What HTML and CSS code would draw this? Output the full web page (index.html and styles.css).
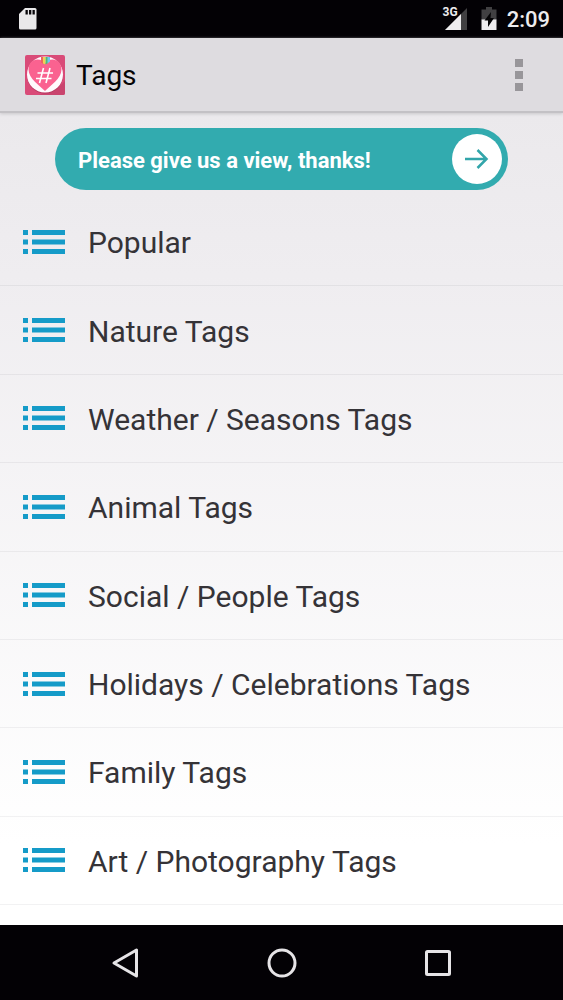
FILE: index.html
```html
<!DOCTYPE html>
<html lang="en">
<head>
<meta charset="utf-8">
<meta name="viewport" content="width=device-width, initial-scale=1">
<title>Tags</title>
<link rel="stylesheet" href="styles.css">
</head>
<body>
<svg class="sprite" aria-hidden="true">
  <symbol id="list-icon" viewBox="0 0 44 24">
    <path d="M1 0h5v5H1zM1 9.500h5v5H1zM1 19h5v5H1zM10 0h33v5H10zM10 9.500h33v5H10zM10 19h33v5H10z" fill="#159bc8"/>
  </symbol>
</svg>

<div class="status-bar">
  <svg class="sd-card" width="20" height="24" viewBox="0 0 20 24" aria-hidden="true">
    <path d="M7 1h10q1.500 0 1.500 1.500v18.500q0 1.500-1.500 1.500H2.500Q1 22.500 1 21V7z" fill="#e9e8ea"/>
    <path d="M7.500 3h2.300v4.500H7.500zM11 3h2.300v4.500H11zM14.500 3h2.300v4.500h-2.300z" fill="#08060a"/>
  </svg>
  <div class="status-right">
    <span class="network">3G</span>
    <svg class="signal" width="23" height="23" viewBox="0 0 23 23" aria-hidden="true">
      <path d="M23 0v22H1z" fill="#414042"/>
      <path d="M17 6V22H1z" fill="#eeedef"/>
    </svg>
    <svg class="battery" width="16" height="24" viewBox="0 0 16 24" aria-hidden="true">
      <path d="M5 0h6v2.500h4.500V13H.5V2.500H5z" fill="#414042"/>
      <path d="M.5 12.500h15V23H.5z" fill="#eeedef"/>
      <path d="M10 5 3.500 13.500h3.500V20L13 11H9.500z" fill="#050406"/>
    </svg>
    <time class="clock">2:09</time>
  </div>
</div>

<header class="app-bar">
  <svg class="logo" width="40" height="40" viewBox="0 0 40 40" aria-hidden="true">
    <rect width="40" height="40" rx="2" fill="#d94b78"/>
    <path d="M34 32l6-6v12q0 2-2 2H14l5-2z" fill="#c9446e"/>
    <circle cx="20" cy="20.500" r="18" fill="#b93a62"/>
    <circle cx="20" cy="19.500" r="18" fill="#fffafd"/>
    <path d="M20 36C15 31 3.500 23.500 3.500 14.500 3.500 8 8 4.500 12.500 4.500c3.500 0 6 2 7.500 4 1.500-2 4-4 7.500-4 4.500 0 9 3.500 9 10C36.500 23.500 25 31 20 36z" fill="#fa6290"/>
    <path d="M16 2h2.500v7L16 7.500z" fill="#eb685d"/>
    <path d="M18 2h2.500v7.500L18 8.500z" fill="#f3cf53"/>
    <path d="M20.500 2H23v6l-2.500 1.500z" fill="#55b96f"/>
    <path d="M22.500 2H25v4.500L22.500 8.500z" fill="#6fc6ef"/>
    <path d="M18.500 13l-4 15M25 13l-4 15M12.500 18H28M11 23.500h15.500" fill="none" stroke="#fff" stroke-width="1.600"/>
  </svg>
  <h1 class="title">Tags</h1>
  <button class="menu" type="button" aria-label="More options">
    <svg width="8" height="32" viewBox="0 0 8 32" aria-hidden="true">
      <path d="M0 0h8v8H0zM0 12h8v8H0zM0 24h8v8H0z" fill="#98969a"/>
    </svg>
  </button>
</header>

<main class="content">
  <button class="banner" type="button">
    <span class="label">Please give us a view, thanks!</span>
    <span class="banner-arrow">
      <svg width="24" height="20" viewBox="0 0 24 20" aria-hidden="true">
        <path d="M0 10h22M12.500 1l9 9-9 9" fill="none" stroke="#32a5aa" stroke-width="2.500"/>
      </svg>
    </span>
  </button>
  <ul class="tags">
    <li><a href="#popular"><svg class="list-icon" aria-hidden="true"><use href="#list-icon"/></svg><span class="label">Popular</span></a></li>
    <li><a href="#nature"><svg class="list-icon" aria-hidden="true"><use href="#list-icon"/></svg><span class="label">Nature Tags</span></a></li>
    <li><a href="#weather"><svg class="list-icon" aria-hidden="true"><use href="#list-icon"/></svg><span class="label">Weather / Seasons Tags</span></a></li>
    <li><a href="#animal"><svg class="list-icon" aria-hidden="true"><use href="#list-icon"/></svg><span class="label">Animal Tags</span></a></li>
    <li><a href="#social"><svg class="list-icon" aria-hidden="true"><use href="#list-icon"/></svg><span class="label">Social / People Tags</span></a></li>
    <li><a href="#holidays"><svg class="list-icon" aria-hidden="true"><use href="#list-icon"/></svg><span class="label">Holidays / Celebrations Tags</span></a></li>
    <li><a href="#family"><svg class="list-icon" aria-hidden="true"><use href="#list-icon"/></svg><span class="label">Family Tags</span></a></li>
    <li><a href="#art"><svg class="list-icon" aria-hidden="true"><use href="#list-icon"/></svg><span class="label">Art / Photography Tags</span></a></li>
  </ul>
</main>

<nav class="nav-bar" aria-label="System">
  <button type="button" aria-label="Back">
    <svg width="32" height="32" viewBox="0 0 32 32" aria-hidden="true"><path d="M26.500 3v26L4 16z" fill="none" stroke="#e6e4e7" stroke-width="3" stroke-linejoin="round"/></svg>
  </button>
  <button type="button" aria-label="Home">
    <svg width="32" height="32" viewBox="0 0 32 32" aria-hidden="true"><circle cx="16" cy="16" r="13" fill="none" stroke="#e6e4e7" stroke-width="3"/></svg>
  </button>
  <button type="button" aria-label="Recent apps">
    <svg width="32" height="32" viewBox="0 0 32 32" aria-hidden="true"><rect x="4.500" y="4.500" width="23" height="23" rx="1" fill="none" stroke="#e6e4e7" stroke-width="3"/></svg>
  </button>
</nav>
</body>
</html>
```
FILE: styles.css
```css
* {
  box-sizing: border-box;
}

body {
  margin: 0;
  min-height: 100vh;
  display: flex;
  flex-direction: column;
  font-family: Roboto, "Liberation Sans", sans-serif;
  color: #353337;
  background: #fff;
}

button {
  border: 0;
  padding: 0;
  background: none;
  font: inherit;
  cursor: pointer;
}

svg {
  display: block;
  flex: none;
}

.sprite {
  position: absolute;
  width: 0;
  height: 0;
}

.status-bar {
  display: flex;
  align-items: center;
  justify-content: space-between;
  height: 38px;
  padding: 0 13px 0 18px;
  background: #030105;
  color: #edecee;
}

.status-right {
  display: flex;
  align-items: center;
}

.network {
  align-self: flex-start;
  margin-right: -14px;
  padding-top: 1px;
  font-size: 12px;
  line-height: 14px;
  font-weight: 700;
}

.battery {
  margin: 0 10px 0 14px;
}

.clock {
  padding-top: 2px;
  font-size: 22px;
  line-height: 28px;
  font-weight: 500;
}

.app-bar {
  position: relative;
  z-index: 1;
  display: flex;
  align-items: center;
  height: 75px;
  padding: 0 40px 0 25px;
  background: #dedce0;
  border-bottom: 2px solid #c3c1c5;
  box-shadow: 0 1px 3px #c9c7cb;
}

.title {
  flex: 1;
  margin: 0 0 0 11px;
  padding-top: 3px;
  font-size: 28px;
  line-height: 36px;
  font-weight: 400;
  color: #050406;
}

.content {
  flex: 1;
  display: flex;
  flex-direction: column;
  padding: 15px 0 20px;
  background: linear-gradient(#ebe9ec, #efedf0 20%, #fff 90%);
}

.label {
  padding-top: 3px;
}

.banner {
  display: flex;
  align-items: center;
  justify-content: space-between;
  margin: 0 55px 8px;
  padding: 6px 6px 6px 23px;
  border-radius: 32px;
  background: #32abaf;
  color: #fff;
  font-size: 22px;
  line-height: 28px;
  font-weight: 700;
}

.banner-arrow {
  display: flex;
  align-items: center;
  justify-content: center;
  width: 50px;
  height: 50px;
  border-radius: 50%;
  background: #fff;
}

.tags {
  flex: 1;
  display: flex;
  flex-direction: column;
  margin: 0;
  padding: 0;
  list-style: none;
}

.tags li {
  flex: 1;
  display: flex;
  border-bottom: 1px solid rgba(40, 30, 50, 0.06);
}

.tags a {
  flex: 1;
  display: flex;
  align-items: center;
  gap: 22px;
  padding: 0 22px;
  color: inherit;
  font-size: 30px;
  line-height: 36px;
  text-decoration: none;
}

.list-icon {
  width: 44px;
  height: 24px;
}

.nav-bar {
  display: flex;
  align-items: center;
  justify-content: center;
  gap: 124px;
  height: 75px;
  background: #030105;
}
```
